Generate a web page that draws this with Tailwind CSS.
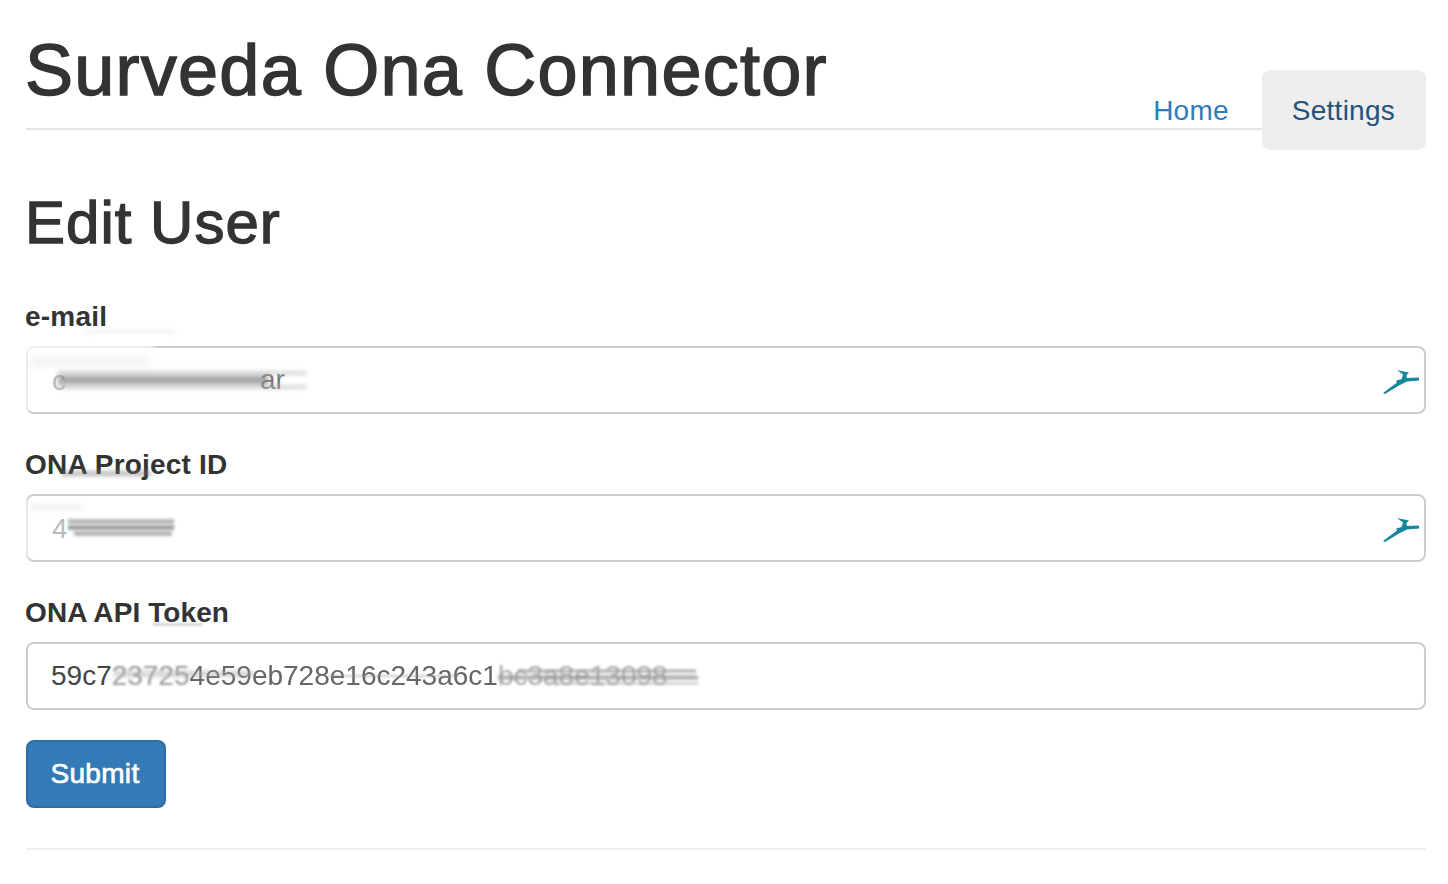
<!DOCTYPE html>
<html lang="en">
<head>
  <meta charset="UTF-8" />
  <title>Surveda Ona Connector</title>
  <script src="https://cdn.jsdelivr.net/npm/@tailwindcss/browser@4"></script>
</head>
<body class="bg-white text-[#333] font-['Liberation_Sans',Arial,sans-serif] overflow-hidden">
  <div class="mx-[26px] w-[1400px]">
    <!-- Header -->
    <header class="flex items-end justify-between h-[130px] border-b-2 border-[#e5e5e5]">
      <h1 class="-ml-px text-[72px] leading-[80px] mb-[18px] font-normal tracking-[1.25px] [-webkit-text-stroke:1.5px_#333]">Surveda Ona Connector</h1>
      <nav class="flex items-start gap-[3px] self-start mt-[70px] text-[28px] leading-[40px] tracking-[0.25px]">
        <a href="#" class="px-[30px] pt-[21px] text-[#337ab7]">Home</a>
        <a href="#" class="pl-[30px] pr-[31px] pt-[21px] h-[80px] rounded-[8px] bg-[#eeeeee] text-[#23527c]">Settings</a>
      </nav>
    </header>

    <h2 class="-ml-px text-[60px] leading-[66px] mt-[60px] mb-[40px] font-normal tracking-[1px] [-webkit-text-stroke:1.3px_#333]">Edit User</h2>

    <form>
      <!-- e-mail -->
      <label class="relative block -ml-px pt-px text-[28px] leading-[40px] font-bold tracking-[0.2px] mb-[10px] h-[40px]">e-mail
        <span class="absolute left-[60px] top-[34px] w-[90px] h-[3px] bg-[#ddd]/50 blur-[2px]"></span>
      </label>
      <div class="relative h-[68px] mb-[30px] rounded-[8px] border-2 border-[#cccccc] bg-white">
        <span class="absolute left-[24px] top-[13px] text-[28px] leading-[40px] text-[#bbb]">c</span>
        <span class="absolute left-[232px] top-[12px] text-[28px] leading-[40px] text-[#777]">ar</span>
        <span class="absolute left-[30px] top-[27px] w-[210px] h-[10px] bg-[#888]/70 blur-[2px]"></span>
        <span class="absolute left-[30px] top-[23px] w-[248px] h-[4px] bg-[#bbb]/60 blur-[2px]"></span>
        <span class="absolute left-[30px] top-[37px] w-[248px] h-[4px] bg-[#bbb]/60 blur-[2px]"></span>
        <span class="absolute -left-[4px] -top-[3px] w-[130px] h-[8px] bg-white/80 blur-[2px]"></span>
        <span class="absolute -left-[4px] top-[4px] w-[8px] h-[58px] bg-white/70 blur-[2px]"></span>
        <span class="absolute left-[2px] top-[8px] w-[120px] h-[12px] bg-[#ddd]/30 blur-[3px]"></span>
        <svg class="absolute right-[4px] top-[20px]" width="38" height="26" viewBox="0 0 38 26">
          <path d="M1 25 L15 14.5 L14 12.5 L24 10 L37 9.5 L37 12.5 L25 13.5 L17 17.5 L3 26 Z M15 2 L27 4.5 L24.5 7 L25 11 L19 12.5 L21 6.5 Z" fill="#17879e" />
        </svg>
      </div>

      <!-- project id -->
      <label class="relative block -ml-px pt-px text-[28px] leading-[40px] font-bold tracking-[0.2px] mb-[10px] h-[40px]">ONA Project ID
        <span class="absolute left-[36px] top-[27px] w-[90px] h-[5px] bg-[#777]/50 blur-[2px]"></span>
      </label>
      <div class="relative h-[68px] mb-[30px] rounded-[8px] border-2 border-[#cccccc] bg-white">
        <span class="absolute left-[24px] top-[13px] text-[28px] leading-[40px] text-[#bbb]">4</span>
        <span class="absolute left-[40px] top-[23px] w-[106px] h-[5px] bg-[#999]/70 blur-[1.5px]"></span>
        <span class="absolute left-[40px] top-[29px] w-[106px] h-[5px] bg-[#888]/80 blur-[1.5px]"></span>
        <span class="absolute left-[46px] top-[35px] w-[98px] h-[5px] bg-[#999]/70 blur-[1.5px]"></span>
        <span class="absolute -left-[4px] top-[4px] w-[8px] h-[58px] bg-white/60 blur-[2px]"></span>
        <span class="absolute left-[2px] top-[8px] w-[52px] h-[6px] bg-[#ddd]/40 blur-[2px]"></span>
        <svg class="absolute right-[4px] top-[20px]" width="38" height="26" viewBox="0 0 38 26">
          <path d="M1 25 L15 14.5 L14 12.5 L24 10 L37 9.5 L37 12.5 L25 13.5 L17 17.5 L3 26 Z M15 2 L27 4.5 L24.5 7 L25 11 L19 12.5 L21 6.5 Z" fill="#17879e" />
        </svg>
      </div>

      <!-- api token -->
      <label class="relative block -ml-px pt-px text-[28px] leading-[40px] font-bold tracking-[0.1px] mb-[10px] h-[40px]">ONA API Token
        <span class="absolute left-[128px] top-[31px] w-[50px] h-[3px] bg-[#999]/40 blur-[1px]"></span>
      </label>
      <div class="relative h-[68px] mb-[30px] rounded-[8px] border-2 border-[#cccccc] bg-white overflow-hidden">
        <span class="absolute left-[23px] top-[12px] text-[28px] leading-[40px] text-[#444] whitespace-nowrap">59c7<span class="text-[#999] blur-[0.8px]">23725</span><span class="text-[#666] blur-[0.5px]">4e59eb728e16c243a6c1</span><span class="text-[#aaa] blur-[0.8px]">bc3a8e13098</span></span>
        <span class="absolute left-[86px] top-[27px] w-[140px] h-[6px] bg-[#aaa]/50 blur-[2px]"></span>
        <span class="absolute left-[300px] top-[31px] w-[130px] h-[2px] bg-[#999]/50 blur-[1px]"></span>
        <span class="absolute left-[490px] top-[25px] w-[178px] h-[4px] bg-[#aaa]/70 blur-[1px]"></span>
        <span class="absolute left-[470px] top-[31px] w-[200px] h-[5px] bg-[#999]/70 blur-[1.5px]"></span>
        <span class="absolute left-[520px] top-[38px] w-[150px] h-[3px] bg-[#bbb]/60 blur-[1px]"></span>
      </div>

      <button type="button" class="block w-[140px] h-[68px] pr-[2px] rounded-[8px] bg-[#337ab7] border-2 border-[#2e6da4] text-white text-[28px] tracking-[0.3px] [-webkit-text-stroke:0.7px_#fff]">Submit</button>
    </form>

    <hr class="mt-[40px] border-t-2 border-[#eeeeee]" />
  </div>
</body>
</html>
